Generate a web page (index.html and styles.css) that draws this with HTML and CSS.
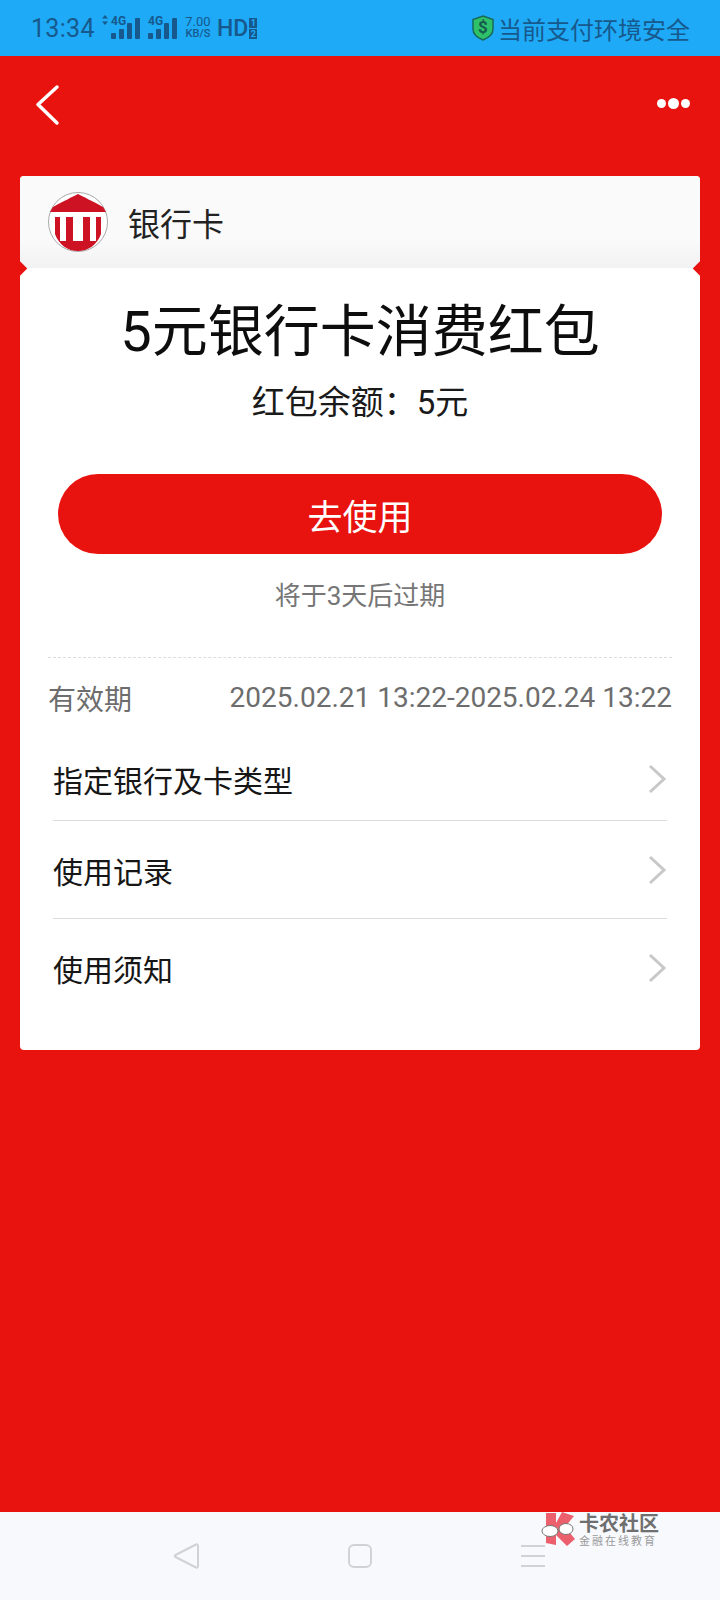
FILE: index.html
```html
<!DOCTYPE html>
<html lang="zh-CN">
<head>
    <meta charset="UTF-8">
    <title>银行卡消费红包</title>
    <meta name="viewport" content="width=device-width, initial-scale=1.0">
    <link rel="stylesheet" href="styles.css">
</head>
<body>
<div class="page">
    <div class="status-bar">
        <div class="status-left">
            <span class="clock">13:34</span>
            <svg class="arrows" width="8" height="10" viewBox="0 0 8 10"><path d="M4 0 7 3.6H1zM4 10 1 6.4h6z"/></svg>
            <div class="signal"><span class="net">4G</span>
                <svg width="29" height="21" viewBox="0 0 29 21"><rect x="0" y="15" width="5" height="6" rx="1"/><rect x="8" y="11" width="5" height="10" rx="1"/><rect x="16" y="5" width="5" height="16" rx="1"/><rect x="24" y="0" width="5" height="21" rx="1"/></svg>
            </div>
            <div class="signal second"><span class="net">4G</span>
                <svg width="29" height="21" viewBox="0 0 29 21"><rect x="0" y="15" width="5" height="6" rx="1"/><rect x="8" y="11" width="5" height="10" rx="1"/><rect x="16" y="5" width="5" height="16" rx="1"/><rect x="24" y="0" width="5" height="21" rx="1"/></svg>
            </div>
            <div class="speed"><span>7.00</span><span class="unit">KB/S</span></div>
            <span class="hd">HD</span>
            <div class="sims"><span>1</span><span>2</span></div>
        </div>
        <div class="status-right">
            <svg width="22" height="26" viewBox="0 0 22 26"><path d="M11 1 21 4.500V14C21 19 16 23 11 25 6 23 1 19 1 14V4.500Z" fill="#2fc16a" stroke="#176a5a" stroke-width="1.500"/><text x="11" y="18" text-anchor="middle" class="dollar">$</text></svg>
            <span>当前支付环境安全</span>
        </div>
    </div>

    <div class="top-nav">
        <svg width="26" height="42" viewBox="0 0 26 42"><path d="M23 3 4 20.500 23 39" fill="none" stroke="#fff" stroke-width="3.500" stroke-linecap="round" stroke-linejoin="round"/></svg>
        <div class="dots"><i></i><i class="big"></i><i></i></div>
    </div>

    <div class="card">
        <div class="card-head">
            <svg class="bank-logo" width="60" height="60" viewBox="0 0 60 60">
                <circle cx="30" cy="30" r="29.500" fill="#fff" stroke="#a9a9a9" stroke-width="1"/>
                <path d="M30 2 C36 5 44 9 55 15 L58 20 H2 L5 15 C16 9 24 5 30 2Z" fill="#cd1223"/>
                <path d="M7 25H12V49H18V25H25V49H35V25H42V49H48V25H53V42C49 53 40 59 30 59 20 59 11 53 7 42Z" fill="#cd1223"/>
            </svg>
            <span>银行卡</span>
        </div>
        <div class="card-body">
            <h1>5元银行卡消费红包</h1>
            <p class="balance">红包余额：5元</p>
            <button class="use-btn">去使用</button>
            <p class="expire">将于3天后过期</p>
            <div class="valid">
                <span>有效期</span>
                <span>2025.02.21 13:22-2025.02.24 13:22</span>
            </div>
            <ul class="menu">
                <li>指定银行及卡类型<svg width="20" height="30" viewBox="0 0 20 30"><path d="M3 2 17 15 3 28" fill="none" stroke="#c8c8c8" stroke-width="3"/></svg></li>
                <li>使用记录<svg width="20" height="30" viewBox="0 0 20 30"><path d="M3 2 17 15 3 28" fill="none" stroke="#c8c8c8" stroke-width="3"/></svg></li>
                <li>使用须知<svg width="20" height="30" viewBox="0 0 20 30"><path d="M3 2 17 15 3 28" fill="none" stroke="#c8c8c8" stroke-width="3"/></svg></li>
            </ul>
        </div>
    </div>

    <div class="nav-bar">
        <svg width="26" height="28" viewBox="0 0 26 28"><path d="M23 2.500C24 2 25 2.800 25 4V24C25 25.200 24 26 23 25.500L2.500 15C1.500 14.500 1.500 13.500 2.500 13Z" fill="none" stroke="#d0d2d8" stroke-width="2" stroke-linejoin="round"/></svg>
        <svg width="24" height="24" viewBox="0 0 24 24"><rect x="1" y="1" width="22" height="22" rx="5" fill="none" stroke="#d0d2d8" stroke-width="2"/></svg>
        <div class="menu-icon"><i></i><i></i><i></i></div>
        <div class="watermark">
            <svg width="36" height="36" viewBox="0 0 36 36"><path d="M5 1H15V11L21 0 33 4 24 15 34 27 26 34 15 23V33L5 31Z" fill="#ec5f6c"/><ellipse cx="9" cy="19" rx="8" ry="5.500" fill="#fff" stroke="#777" stroke-width="1"/><ellipse cx="25" cy="17" rx="7" ry="5.500" fill="#fff" stroke="#777" stroke-width="1"/></svg>
            <div class="wm-text"><b>卡农社区</b><small>金融在线教育</small></div>
        </div>
    </div>
</div>
</body>
</html>
```

FILE: styles.css
```css
* { box-sizing: border-box; }
body { margin: 0; font-family: Roboto, "Noto Sans CJK SC", sans-serif; }
.page { width: 720px; height: 1600px; background-color: #e8130f; display: flex; flex-direction: column; position: relative; overflow: hidden; }

.status-bar { height: 56px; background-color: #1eaaf7; color: #17598c; display: flex; justify-content: space-between; align-items: center; padding: 0 30px 0 31px; flex-shrink: 0; }
.status-left { display: flex; align-items: center; }
.status-left svg { fill: #17598c; }
.clock { font-size: 25px; letter-spacing: 0.3px; width: 70px; }
.arrows { margin: -16px 2px 0 0; }
.signal { position: relative; width: 29px; height: 21px; }
.signal.second { margin-left: 8px; }
.signal svg { display: block; }
.net { position: absolute; left: 0; top: -3px; font-size: 12px; font-weight: 700; line-height: 12px; }
.signal svg rect:nth-child(1), .signal svg rect:nth-child(2) { }
.speed { display: flex; flex-direction: column; align-items: center; font-size: 13px; line-height: 12px; margin-left: 7px; width: 28px; }
.speed .unit { font-size: 11px; font-weight: 500; }
.hd { font-size: 23px; font-weight: 500; margin-left: 5px; }
.sims { display: flex; flex-direction: column; gap: 1px; margin-left: 1px; }
.sims span { width: 8px; height: 10px; background-color: #17598c; color: #1eaaf7; font-size: 9px; line-height: 10px; text-align: center; font-weight: 700; }
.status-right { display: flex; align-items: center; gap: 4px; font-size: 24px; }
.status-right svg { display: block; }
.dollar { font-size: 17px; font-weight: 700; fill: #155a4a; font-family: Roboto, sans-serif; }

.top-nav { height: 120px; display: flex; justify-content: space-between; align-items: flex-start; padding: 28px 30px 0 34px; flex-shrink: 0; }
.dots { display: flex; align-items: center; gap: 2px; margin-top: 14px; }
.dots i { width: 9px; height: 9px; background: #fff; border-radius: 50%; }
.dots i.big { width: 11px; height: 11px; }

.card { margin: 0 20px; height: 874px; background-color: #fff; border-radius: 4px; position: relative; flex-shrink: 0; }
.card::before, .card::after { content: ""; position: absolute; top: 87px; width: 11px; height: 11px; background-color: #e8130f; transform: rotate(45deg); }
.card::before { left: -6px; }
.card::after { right: -6px; }
.card-head { height: 92px; padding-left: 28px; display: flex; align-items: center; gap: 20px; font-size: 32px; color: #222; background: linear-gradient(#fafafa, #fafafa 70%, #f2f2f2); border-radius: 4px 4px 0 0; }
.card-body { padding: 0 28px; text-align: center; }
h1 { margin: 32px 0 0; font-size: 56px; font-weight: 400; line-height: 64px; color: #0d0d0d; }
.balance { margin: 16px 0 0; font-size: 33px; line-height: 46px; color: #1a1a1a; }
.use-btn { display: block; width: 604px; height: 80px; margin: 48px auto 0; border: none; border-radius: 40px; background-color: #e8130f; color: #fff; font-family: inherit; font-size: 35px; padding: 0; }
.expire { margin: 23px 0 0; font-size: 26px; line-height: 38px; color: #767676; }
.valid { margin-top: 42px; border-top: 1px dashed #ddd; display: flex; justify-content: space-between; align-items: center; height: 80px; padding-top: 0; font-size: 28px; color: #6d6d6d; }
.menu { list-style: none; margin: 0; padding: 0 5px; }
.menu li { height: 98px; border-bottom: 1px solid #dcdcdc; display: flex; justify-content: space-between; align-items: center; font-size: 30px; color: #161616; margin-top: 0; }
.menu li:first-child { height: 84px; padding-top: 0; }
.menu li:last-child { border-bottom: none; }

.nav-bar { margin-top: auto; height: 88px; background-color: #f8f9fd; display: flex; align-items: center; padding: 0 0 0 173px; position: relative; }
.nav-bar svg { display: block; }
.nav-bar > svg:nth-child(2) { margin-left: 149px; }
.menu-icon { margin-left: 149px; display: flex; flex-direction: column; gap: 8px; }
.menu-icon i { display: block; width: 24px; height: 2px; background-color: #d0d2d8; }
.watermark { position: absolute; left: 541px; top: 0; display: flex; gap: 2px; }
.wm-text { display: flex; flex-direction: column; color: #6f6f6f; }
.wm-text b { font-size: 20px; line-height: 24px; }
.wm-text small { font-size: 11px; letter-spacing: 2px; line-height: 12px; color: #9a9a9a; }
```
